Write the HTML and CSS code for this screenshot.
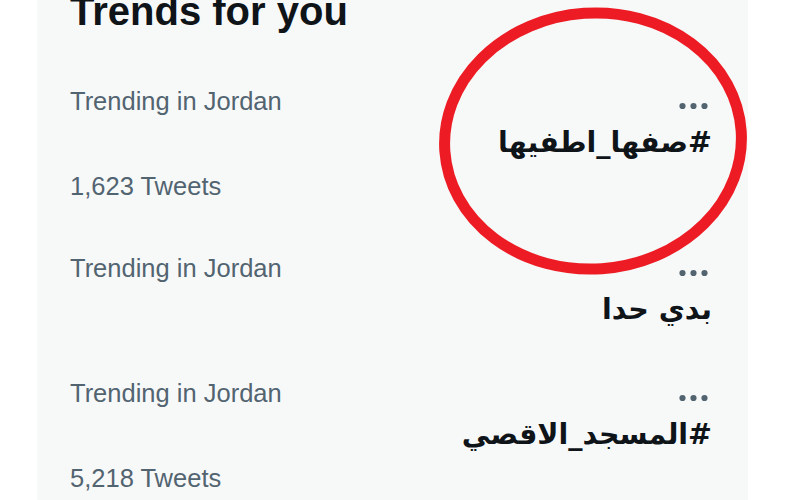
FILE: index.html
```html
<!DOCTYPE html>
<html lang="en">
<head>
<meta charset="utf-8">
<title>Trends for you</title>
<link rel="stylesheet" href="styles.css">
</head>
<body>
<div class="panel">
  <h2 class="title">Trends for you</h2>
  <ul class="trends">
    <li class="trend">
      <div class="meta">
        <span class="context">Trending in Jordan</span>
        <span class="more" aria-label="More"><svg width="30" height="8" viewBox="0 0 30 8"><circle cx="3.5" cy="4" r="3.1"/><circle cx="14.5" cy="4" r="3.1"/><circle cx="25.5" cy="4" r="3.1"/></svg></span>
      </div>
      <div class="name" dir="rtl">#صفها_اطفيها</div>
      <div class="count">1,623 Tweets</div>
    </li>
    <li class="trend">
      <div class="meta">
        <span class="context">Trending in Jordan</span>
        <span class="more" aria-label="More"><svg width="30" height="8" viewBox="0 0 30 8"><circle cx="3.5" cy="4" r="3.1"/><circle cx="14.5" cy="4" r="3.1"/><circle cx="25.5" cy="4" r="3.1"/></svg></span>
      </div>
      <div class="name" dir="rtl">بدي حدا</div>
    </li>
    <li class="trend">
      <div class="meta">
        <span class="context">Trending in Jordan</span>
        <span class="more" aria-label="More"><svg width="30" height="8" viewBox="0 0 30 8"><circle cx="3.5" cy="4" r="3.1"/><circle cx="14.5" cy="4" r="3.1"/><circle cx="25.5" cy="4" r="3.1"/></svg></span>
      </div>
      <div class="name" dir="rtl">#المسجد_الاقصي</div>
      <div class="count">5,218 Tweets</div>
    </li>
  </ul>
  <svg class="circle-mark" width="330" height="290" viewBox="0 0 330 290">
    <ellipse cx="155" cy="138" rx="148.5" ry="128" transform="rotate(-4 155 138)"/>
  </svg>
</div>
</body>
</html>
```

FILE: styles.css
```css
html, body {
  margin: 0;
  padding: 0;
  background: #ffffff;
}

body {
  width: 800px;
  height: 500px;
  overflow: hidden;
  font-family: "Liberation Sans", Arial, sans-serif;
}

.panel {
  position: relative;
  display: flow-root;
  margin-left: 37px;
  width: 711px;
  height: 500px;
  background: #f7f9f9;
  box-sizing: border-box;
  padding: 0 36px 0 33px;
}

.title {
  margin: -13px 0 0 0;
  font-size: 40px;
  line-height: 48px;
  font-weight: 700;
  color: #0f1419;
}

.trends {
  list-style: none;
  margin: 49px 0 0 0;
  padding: 0;
}

.trend {
  margin-bottom: 41px;
}

.meta {
  display: flex;
  justify-content: space-between;
  align-items: center;
  height: 34px;
  line-height: 34px;
}

.context,
.count {
  font-size: 25.5px;
  color: #536471;
}

.more {
  display: flex;
  margin-top: 9px;
  margin-right: 3px;
}

.more svg {
  fill: #536471;
}

.name {
  font-family: "DejaVu Sans", "Liberation Sans", sans-serif;
  font-weight: 700;
  font-size: 28.5px;
  line-height: 50px;
  color: #0f1419;
  text-align: right;
}

.count {
  line-height: 36px;
  padding-bottom: 6px;
}

.circle-mark {
  position: absolute;
  left: 401px;
  top: 3px;
  overflow: visible;
}

.circle-mark ellipse {
  fill: none;
  stroke: #ed1c24;
  stroke-width: 11px;
}
```
